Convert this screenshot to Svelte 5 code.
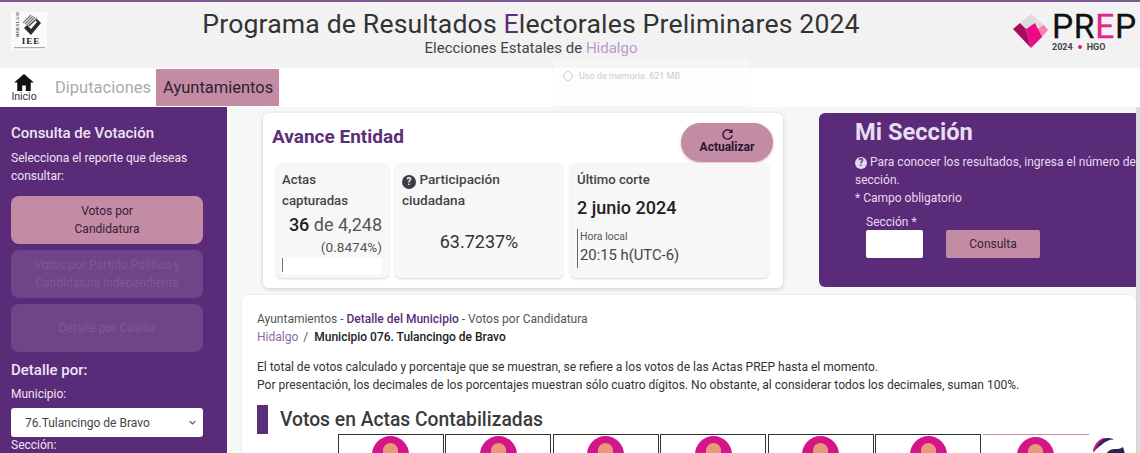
<script>
  const candidates = [0, 1, 2, 3, 4, 5, 6];
</script>

<div class="page">
  <header class="top">
    <div class="iee">
      <svg viewBox="0 0 36 38" width="36" height="38" aria-hidden="true">
        <rect width="36" height="38" fill="#fbfbfb"/>
        <text x="0" y="0" class="vert" transform="translate(7.500 25) rotate(-90)">HIDALGO</text>
        <path d="M12 11 20 3M14 12l8-8M16 13l8-8M18 14l8-8" stroke="#777" stroke-width="1.200" fill="none"/>
        <path d="M17 15 26 7l4 4-10 12-7-7 3-3 4 4 6-7-2-2-6 5z" fill="#2c2c2c"/>
        <text x="20" y="32" class="ieet">IEE</text>
        <rect x="3" y="35" width="31" height="1.200" fill="#aaa"/>
      </svg>
    </div>
    <div class="titles">
      <h1>Programa de Resultados <span class="e">E</span>lectorales Preliminares 2024</h1>
      <p>Elecciones Estatales de <span class="hgo">Hidalgo</span></p>
    </div>
    <div class="prep">
      <svg viewBox="0 0 36 36" width="36" height="36" aria-hidden="true">
        <path d="M18 1 7 10l6 6 9-6 5 5 4-3z" fill="#dcdcdc"/>
        <path d="M31 12l4 5-7 8-4-9z" fill="#f77fb4"/>
        <path d="M13 16l9-6 7 14-11 11z" fill="#ec0b85"/>
        <path d="M0 16l7-6 6 6 5 19z" fill="#a30f5f"/>
      </svg>
      <div class="prep-t">
        <div class="word">PR<span>E</span>P</div>
        <div class="sub"><span>2024</span><i></i><span>HGO</span></div>
      </div>
    </div>
  </header>

  <nav class="tabs">
    <a class="home" href="#inicio">
      <svg viewBox="0 0 24 20" width="22" height="18" aria-hidden="true">
        <path d="M12 1 1 10.500h3.500V20h5.500v-6h4v6h5.500v-9.500H23z" fill="#111"/>
      </svg>
      <span>Inicio</span>
    </a>
    <a class="tab" href="#d">Diputaciones</a>
    <a class="tab active" href="#a">Ayuntamientos</a>
  </nav>

  <div class="ghost">
    <span class="ghost-i"></span>Uso de memoria: 621 MB
  </div>

  <div class="body">
    <aside class="side">
      <h2>Consulta de Votación</h2>
      <p>Selecciona el reporte que deseas consultar:</p>
      <button class="opt on">Votos por<br />Candidatura</button>
      <button class="opt off">Votos por Partido Político y<br />Candidatura Independiente</button>
      <button class="opt off">Detalle por Casilla</button>
      <h3>Detalle por:</h3>
      <label for="mun">Municipio:</label>
      <div class="select" id="mun">
        <span>76.Tulancingo de Bravo</span>
        <svg viewBox="0 0 10 6" width="7" height="5" aria-hidden="true"><path d="M1 1l4 4 4-4" fill="none" stroke="#555" stroke-width="1.800"/></svg>
      </div>
      <label class="sec" for="mun">Sección:</label>
    </aside>

    <main class="main">
      <div class="row">
        <section class="avance">
          <div class="av-head">
            <h2>Avance Entidad</h2>
            <button class="refresh">
              <svg viewBox="0 0 14 14" width="13" height="13" aria-hidden="true">
                <path d="M11.500 4.500A5 5 0 1 0 12 8" fill="none" stroke="#2a1530" stroke-width="1.500"/>
                <path d="M12.500 1v4.500H8z" fill="#2a1530"/>
              </svg>
              <span>Actualizar</span>
            </button>
          </div>
          <div class="stats">
            <div class="stat s1">
              <h4>Actas<br />capturadas</h4>
              <div class="count"><b>36</b> de 4,248</div>
              <div class="pct">(0.8474%)</div>
              <div class="bar"><i></i></div>
            </div>
            <div class="stat s2">
              <h4><span class="q dark">?</span> Participación<br />ciudadana</h4>
              <div class="big">63.7237%</div>
            </div>
            <div class="stat s3">
              <h4>Último corte</h4>
              <div class="date">2 junio 2024</div>
              <div class="time">
                <small>Hora local</small>
                <span>20:15 h(UTC-6)</span>
              </div>
            </div>
          </div>
        </section>

        <section class="mine">
          <h2>Mi Sección</h2>
          <p class="hint"><span class="q light">?</span><span class="hint-t">Para conocer los resultados, ingresa el número de sección.</span></p>
          <p>* Campo obligatorio</p>
          <div class="form">
            <div class="field">
              <label for="s">Sección *</label>
              <div class="input" id="s"></div>
            </div>
            <button class="go">Consulta</button>
          </div>
        </section>
      </div>

      <section class="detail">
        <div class="crumb">Ayuntamientos - <b>Detalle del Municipio</b> - Votos por Candidatura</div>
        <div class="crumb2"><span class="link">Hidalgo</span><span class="slash">/</span><b>Municipio 076. Tulancingo de Bravo</b></div>
        <p class="note">El total de votos calculado y porcentaje que se muestran, se refiere a los votos de las Actas PREP hasta el momento.<br />Por presentación, los decimales de los porcentajes muestran sólo cuatro dígitos. No obstante, al considerar todos los decimales, suman 100%.</p>
        <div class="vh"><i></i><h2>Votos en Actas Contabilizadas</h2></div>
        <div class="cands">
          {#each candidates as c}
            <div class="cand" class:last={c === 6}>
              <span class="av"><span class="face"></span></span>
            </div>
          {/each}
        </div>
      </section>
      <svg class="badge" viewBox="0 0 36 18" width="36" height="18" aria-hidden="true">
        <circle cx="18" cy="18" r="18" fill="#fff"/>
        <path d="M2 16C3 8 9 2 16 2c3 0 5 .5 7 1.500-5 0-9 2-12 5-3 2-6 5-9 7.500z" fill="#3a1f5c"/>
        <path d="M2 16C3 8 9 2 14 2 9 5 6 9 4 15z" fill="#d4158a"/>
        <path d="M15 18c2-3 5-5 9-5 3 0 5 0 8-2l2 7z" fill="#2a2350"/>
      </svg>
    </main>
    <div class="scroll"></div>
  </div>
</div>

<style>
  :global(body) { margin: 0; }
  .page {
    position: relative;
    width: 1140px;
    height: 453px;
    overflow: hidden;
    font-family: Roboto, "Liberation Sans", sans-serif;
    background: #fff;
    color: #333;
  }
  .top {
    height: 66px;
    border-top: 2px solid #7b5a94;
    background: #f2f2f3;
    display: flex;
    align-items: flex-start;
    box-sizing: content-box;
  }
  .iee { width: 36px; height: 38px; margin: 10px 0 0 11px; }
  .ieet { font: 700 9px "Liberation Serif", serif; text-anchor: middle; fill: #222; letter-spacing: 1px; }
  .vert { font: 700 4.500px "Liberation Serif", serif; fill: #444; letter-spacing: .5px; }
  .titles { flex: 1; text-align: center; padding-left: 2px; margin-top: 5px; }
  h1 { margin: 0; font-size: 26.620px; line-height: 33px; font-weight: 400; color: #333; letter-spacing: 0.150px; }
  .e { color: #5c2d7c; }
  .titles p { margin: 0; font-size: 15px; line-height: 16px; color: #444; }
  .hgo { color: #b99ac9; }
  .prep { width: 127px; display: flex; margin-top: 10px; }
  .prep svg { margin-top: 1px; flex: none; }
  .prep-t { margin-left: 3px; color: #111; }
  .word { font-size: 33.500px; line-height: 30px; letter-spacing: 0.700px; white-space: nowrap; -webkit-text-stroke: 0.300px #111; }
  .word span { color: #e0268a; -webkit-text-stroke: 0.300px #e0268a; }
  .sub { font-size: 9px; font-weight: 700; color: #444; line-height: 10px; display: flex; align-items: center; gap: 5px; white-space: nowrap; }
  .sub i { width: 4px; height: 4px; border-radius: 50%; background: #d81b78; }

  .tabs { height: 39px; display: flex; align-items: stretch; background: #fff; }
  .home { width: 50px; display: flex; flex-direction: column; align-items: center; text-decoration: none; color: #333; padding-top: 5px; font-size: 10.500px; line-height: 11px; box-sizing: border-box; padding-right: 2px; }
  .tab { display: flex; align-items: center; font-size: 16.500px; text-decoration: none; color: #aaa; padding: 0 6px 0 5px; }
  .tab.active { background: #c48ba4; color: #2f2231; padding: 0 6px 0 7px; margin: 1px 0 1px -1px; }

  .ghost {
    position: absolute; left: 553px; top: 60px; width: 197px; height: 46px; box-sizing: border-box;
    padding: 10px 0 0 10px; font-size: 9px; color: #ccc;
    background: rgba(250,250,250,.45); box-shadow: 0 1px 3px rgba(0,0,0,.05); border-radius: 0 0 4px 4px;
    display: flex; align-items: flex-start; gap: 6px; line-height: 13px;
  }
  .ghost-i { width: 8px; height: 8px; border: 1px solid #ccc; border-radius: 50%; margin-top: 1px; }

  .body { display: flex; height: 346px; background: #f6f7f7; }
  .side {
    width: 227px; flex: none; background: #5a2b78; box-sizing: border-box; padding: 17px 24px 0 11px; color: #f0e4f2;
  }
  .side h2 { margin: 0; font-size: 15px; line-height: 18px; font-weight: 500; }
  .side p { margin: 7px 0 0; font-size: 12px; line-height: 18px; }
  .opt {
    display: block; width: 192px; height: 48px; margin: 0 0 6px; border: 0; border-radius: 8px; font: 12px/18px Roboto, sans-serif; padding: 0; text-align: center;
  }
  .opt.on { background: #c48ba4; color: #33203a; margin-top: 11px; }
  .opt.off { background: #6f4488; color: #7e5896; }
  .side h3 { margin: 8px 0 0; font-size: 15px; line-height: 20px; font-weight: 500; }
  label { display: block; font-size: 12px; line-height: 16px; }
  .side label { margin-top: 6px; }
  .select {
    width: 192px; height: 29px; margin-top: 6px; background: #fff; border-radius: 3px; box-sizing: border-box; padding: 0 7px 0 14px;
    display: flex; align-items: center; justify-content: space-between; color: #444; font-size: 12px;
  }
  .side label.sec { margin-top: 1px; line-height: 15px; }

  .main { position: relative; flex: 1; min-width: 0; padding: 6px 0 0 15px; }
  .row { display: flex; align-items: flex-start; }
  .avance {
    width: 520px; height: 175px; margin-left: 21px; box-sizing: border-box; background: #fff; border-radius: 6px; box-shadow: 0 1px 4px rgba(0,0,0,.18);
    padding: 10px 13px 0 9px;
  }
  .av-head { display: flex; justify-content: space-between; height: 40px; }
  .av-head h2 { margin: 3px 0 0; font-size: 19px; line-height: 22px; font-weight: 700; color: #5a2f78; }
  .refresh {
    width: 92px; height: 39px; border: 0; border-radius: 20px; background: #c48ba4; color: #2a1530; padding: 5px 0 0; margin-right: -3px;
    display: flex; flex-direction: column; align-items: center; font: 700 12px/13px Roboto, sans-serif; box-shadow: 0 1px 3px rgba(196,139,164,.6);
  }
  .stats { display: flex; gap: 6px; margin: 0 0 0 4px; }
  .stat { background: #f7f7f8; border-radius: 5px; box-shadow: 0 1px 2px rgba(0,0,0,.15); box-sizing: border-box; height: 115px; padding: 6px 7px; }
  .stat h4 { margin: 0; font-size: 13.200px; line-height: 21px; font-weight: 500; color: #444; }
  .s1 { width: 113px; }
  .s1 h4 { margin-left: -1px; }
  .s2 { width: 168px; }
  .s2 h4 { font-size: 13.600px; }
  .s3 { width: 199px; margin-left: 1px; }
  .count { font-size: 18px; line-height: 24px; text-align: right; color: #555; margin-top: 2px; white-space: nowrap; }
  .count b { color: #222; font-weight: 500; }
  .pct { font-size: 13.600px; line-height: 18px; text-align: right; color: #555; margin-top: 1px; }
  .bar { height: 17px; margin-top: 2px; background: #fff; margin-left: -1px; }
  .bar i { display: block; width: 1px; height: 14px; background: #777; }
  .big { font-size: 18px; line-height: 22px; color: #333; text-align: center; margin-top: 20px; }
  .date { font-size: 18px; line-height: 22px; color: #222; margin-top: 7px; font-weight: 500; }
  .time { margin-top: 10px; border-left: 1px solid #666; padding-left: 2px; height: 39px; display: flex; flex-direction: column; }
  .time small { font-size: 10.500px; line-height: 15px; color: #555; }
  .time span { font-size: 14.800px; line-height: 22px; color: #444; }
  .q { display: inline-block; width: 14px; height: 14px; border-radius: 50%; text-align: center; font: 700 10px/14px Roboto, sans-serif; vertical-align: -1px; }
  .q.dark { background: #3c3c46; color: #f7f7f8; }
  .q.light { width: 12px; height: 12px; line-height: 12px; background: #e6d7ea; color: #5a2b78; vertical-align: 0; margin-right: 3px; }

  .mine {
    width: 317px; height: 174px; margin-left: 36px; box-sizing: border-box; background: #5a2b78; border-radius: 6px 0 0 6px; padding: 5px 0 0 36px; color: #e8daed;
  }
  .mine h2 { margin: 0; font-size: 23.700px; line-height: 28px; font-weight: 700; color: #e9dcef; }
  .mine p { margin: 0; font-size: 12px; line-height: 18px; }
  .mine p.hint { margin-top: 7px; }
  .form { display: flex; align-items: flex-end; margin: 6px 0 0 11px; }
  .field label { line-height: 18px; }
  .input { width: 57px; height: 28px; background: #fff; border-radius: 2px; margin-top: -1px; }
  .go { width: 94px; height: 28px; margin-left: 23px; border: 0; border-radius: 2px; background: #c48ba4; color: #3a2338; font: 12px Roboto, sans-serif; }

  .detail { margin-top: 7px; width: 894px; height: 170px; box-sizing: border-box; background: #fff; border-radius: 6px 6px 0 0; padding: 16px 0 0 15px; box-shadow: 0 0 3px rgba(0,0,0,.08); }
  .crumb { font-size: 12px; line-height: 16px; color: #555; }
  .crumb b { font-weight: 500; color: #5a2f78; }
  .crumb2 { font-size: 12px; line-height: 16px; margin-top: 2px; color: #333; }
  .crumb2 b { font-weight: 500; color: #222; }
  .link { color: #8a6aa8; }
  .slash { margin: 0 6px 0 5px; color: #555; }
  .note { margin: 13px 0 0; font-size: 12.060px; line-height: 18px; color: #333; }
  .vh { display: flex; align-items: center; gap: 12px; margin-top: 11px; }
  .vh i { width: 11px; height: 29px; background: #5a2f78; flex: none; }
  .vh h2 { margin: 0; font-size: 19.300px; line-height: 24px; font-weight: 500; color: #3a3a3a; }
  .cands { display: flex; gap: 1.800px; margin: 0 0 0 81px; height: 40px; }
  .cand { width: 105.700px; flex: none; box-sizing: border-box; height: 40px; border: 1px solid #333; border-bottom: 0; display: flex; justify-content: center; padding-top: 1px; }
  .cand.last { border: 0; border-top: 1px solid #c48ba4; padding-top: 2px; }
  .av { width: 37px; height: 37px; border-radius: 50%; background: #d4158a; display: flex; justify-content: center; padding-top: 7px; box-sizing: border-box; }
  .face { width: 15px; height: 24px; border-radius: 8px 8px 0 0; background: #e8997a; }
  .badge { position: absolute; left: 864px; top: 329px; }
  .scroll { width: 4px; flex: none; background: #dcdcdc; }
</style>
